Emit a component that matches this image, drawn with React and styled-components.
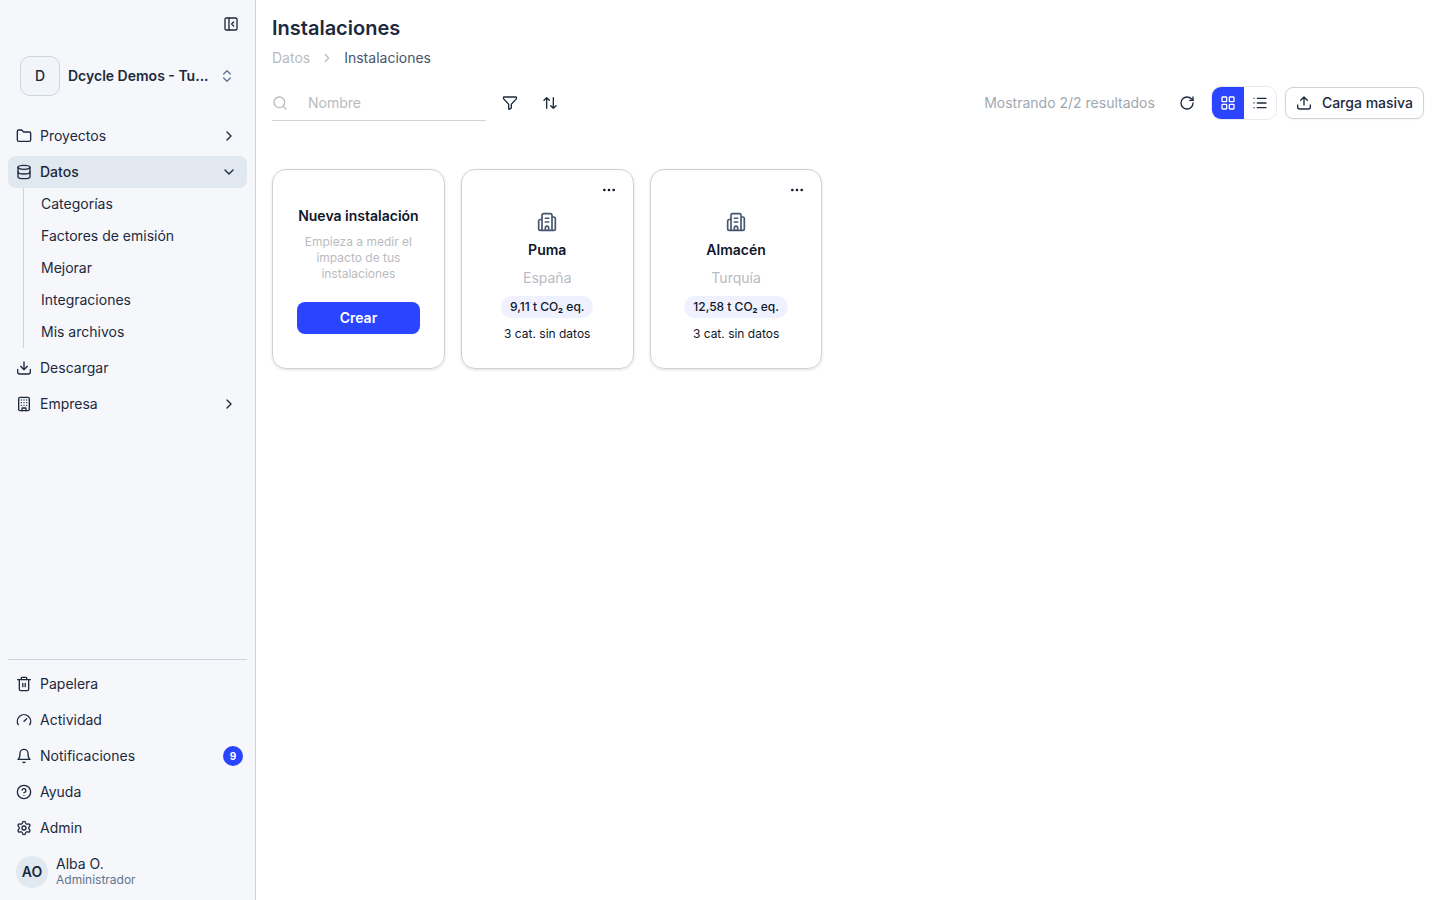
import React from 'react';
import styled, { createGlobalStyle, css } from 'styled-components';
import {
  Building,
  ChevronDown,
  ChevronRight,
  CircleHelp,
  Database,
  Ellipsis,
  Folder,
  Gauge,
  LayoutGrid,
  List,
  PanelLeftClose,
  RotateCw,
  Search,
  Settings,
} from 'lucide-react';

const GlobalStyle = createGlobalStyle`
  :root {
    --blue: #2a44ff;
    --ink: #1d293d;
    --dark: #0f172b;
    --slate: #45556c;
    --muted: #b9bbc0;
    --line: #cad5e2;
    --border: #d0d1d5;
    --panel: #f5f7fb;
    --active: #e1e8ef;
    --fz-xs: 12px;
    --fz-sm: 14px;
    --fz-xl: 20px;
  }

  *,
  *::before,
  *::after {
    box-sizing: border-box;
  }

  body {
    margin: 0;
    background: #fff;
    color: var(--ink);
    font-family: Inter, 'Liberation Sans', sans-serif;
    font-size: var(--fz-sm);
    line-height: 20px;
    -webkit-font-smoothing: antialiased;
  }

  button,
  input {
    font: inherit;
    color: inherit;
  }

  button {
    padding: 0;
    border: 0;
    background: none;
    cursor: pointer;
  }

  a {
    color: inherit;
    text-decoration: none;
  }

  svg {
    display: block;
    flex-shrink: 0;
  }
`;

const StyledLayout = styled.div`
  display: flex;
  min-height: 100vh;
`;

const StyledSidebar = styled.aside`
  display: flex;
  flex-direction: column;
  flex: 0 0 256px;
  padding: 8px;
  border-right: 1px solid var(--line);
  background: var(--panel);
`;

const StyledToggle = styled.button`
  align-self: flex-end;
  padding: 8px;
`;

const StyledCompany = styled.button`
  display: flex;
  align-items: center;
  gap: 8px;
  margin: 16px 0 24px;
  padding: 0 12px;
  text-align: left;
  font-weight: 600;

  .logo {
    display: grid;
    place-items: center;
    flex: 0 0 40px;
    height: 40px;
    border: 1px solid var(--line);
    border-radius: 10px;
    background: #f1f5f9;
    font-weight: 500;
  }

  .name {
    white-space: nowrap;
  }

  svg {
    margin-left: auto;
    color: #62748e;
  }
`;

const StyledNav = styled.ul`
  display: flex;
  flex-direction: column;
  gap: 4px;
  margin: 0;
  padding: 0;
  list-style: none;
`;

const StyledNavItem = styled.a`
  display: flex;
  align-items: center;
  gap: 8px;
  height: 32px;
  padding: 0 10px 0 8px;
  border-radius: 8px;

  ${({ $active }) =>
    $active &&
    css`
      background: var(--active);
      font-weight: 500;
    `}

  .end {
    margin-left: auto;
  }
`;

const StyledSubNav = styled.ul`
  margin: 0 0 0 15px;
  padding: 0;
  border-left: 1px solid var(--line);
  list-style: none;

  a {
    display: block;
    padding: 6px 17px;
  }
`;

const StyledFooter = styled.div`
  margin-top: auto;
  padding-top: 8px;
  border-top: 1px solid var(--line);
`;

const StyledBadge = styled.span`
  display: grid;
  place-items: center;
  width: 20px;
  height: 20px;
  margin: 0 -6px 0 auto;
  border-radius: 50%;
  background: var(--blue);
  color: #fff;
  font-size: 10px;
  font-weight: 700;
`;

const StyledUser = styled.div`
  display: flex;
  align-items: center;
  gap: 8px;
  margin-top: 8px;
  padding: 4px 8px;
  line-height: 16px;

  .avatar {
    display: grid;
    place-items: center;
    width: 32px;
    height: 32px;
    border-radius: 50%;
    background: var(--active);
    font-weight: 600;
  }

  .role {
    color: #62748e;
    font-size: var(--fz-xs);
  }
`;

const StyledMain = styled.main`
  flex: 1;
  min-width: 0;
  padding: 16px;
`;

const StyledTitle = styled.h1`
  margin: 0;
  font-size: var(--fz-xl);
  font-weight: 600;
  line-height: 24px;
`;

const StyledBreadcrumb = styled.nav`
  display: flex;
  align-items: center;
  gap: 10px;
  margin-top: 8px;
  color: var(--muted);

  .current {
    color: var(--slate);
  }
`;

const StyledToolbar = styled.div`
  display: flex;
  align-items: center;
  gap: 8px;
  margin-top: 17px;
`;

const StyledSearch = styled.label`
  display: flex;
  align-items: center;
  gap: 20px;
  width: 214px;
  height: 36px;
  border-bottom: 1px solid var(--border);
  color: var(--muted);

  input {
    width: 100%;
    min-width: 0;
    padding: 0;
    border: 0;
    outline: 0;
    background: none;
    color: var(--ink);
  }

  input::placeholder {
    color: var(--muted);
    opacity: 1;
  }
`;

const StyledIconButton = styled.button`
  display: grid;
  place-items: center;
  width: 32px;
  height: 32px;
`;

const StyledCount = styled.span`
  margin-left: auto;
  padding-right: 8px;
  color: #a1a7b0;
`;

const StyledSwitch = styled.div`
  display: flex;
  border: 1px solid #e8e9ec;
  border-radius: 10px;
  overflow: hidden;
`;

const StyledView = styled(StyledIconButton)`
  background: ${({ $active }) => ($active ? 'var(--blue)' : '#fff')};
  color: ${({ $active }) => ($active ? '#fff' : 'inherit')};
`;

const StyledUpload = styled.button`
  display: flex;
  align-items: center;
  gap: 10px;
  height: 32px;
  padding: 0 10px;
  border: 1px solid var(--border);
  border-radius: 8px;
  box-shadow: 0 1px 2px rgba(0, 0, 0, 0.05);
  font-weight: 500;
`;

const StyledGrid = styled.div`
  display: grid;
  grid-template-columns: repeat(6, 1fr);
  gap: 16px;
  margin-top: 48px;
  padding-right: 35px;
`;

const StyledCard = styled.article`
  position: relative;
  display: flex;
  flex-direction: column;
  align-items: center;
  min-height: 200px;
  padding: ${({ $create }) => ($create ? '36px 24px 24px' : '42px 8px 24px')};
  border: 1px solid var(--border);
  border-radius: 14px;
  box-shadow: 0 1px 3px rgba(0, 0, 0, 0.12);
  color: var(--dark);
  text-align: center;

  h2 {
    margin: 0;
    font-size: var(--fz-sm);
    font-weight: 600;
    white-space: nowrap;
  }

  p {
    margin: 0;
    font-size: var(--fz-xs);
    line-height: 16px;
  }

  .hint {
    margin: 8px 0 20px;
    color: var(--muted);
  }

  .country {
    margin: 8px 0;
    color: var(--muted);
  }

  .building {
    margin-bottom: 8px;
    color: var(--slate);
  }
`;

const StyledMore = styled.button`
  position: absolute;
  top: 12px;
  right: 16px;
`;

const StyledCreate = styled.button`
  width: 100%;
  height: 32px;
  border-radius: 8px;
  background: var(--blue);
  color: #fff;
  font-weight: 600;
`;

const StyledPill = styled.span`
  margin-bottom: 8px;
  padding: 3px 9px;
  border-radius: 11px;
  background: #eff1ff;
  font-size: var(--fz-xs);
  font-weight: 500;
  line-height: 16px;
`;

const Icon = ({ size = 16, children, ...rest }) => (
  <svg
    width={size}
    height={size}
    viewBox="0 0 24 24"
    fill="none"
    stroke="currentColor"
    strokeWidth={2}
    strokeLinecap="round"
    strokeLinejoin="round"
    aria-hidden="true"
    {...rest}>
    {children}
  </svg>
);

const SelectorIcon = () => (
  <Icon>
    <path d="M7 9l5-5 5 5M7 15l5 5 5-5" />
  </Icon>
);

const DownloadIcon = () => (
  <Icon>
    <path d="M12 3v11M7 9.500l5 5 5-5M2.500 14v4a3 3 0 0 0 3 3h13a3 3 0 0 0 3-3v-4" />
  </Icon>
);

const UploadIcon = () => (
  <Icon>
    <path d="M12 15V3M7 8l5-5 5 5M2.500 15v3a3 3 0 0 0 3 3h13a3 3 0 0 0 3-3v-3" />
  </Icon>
);

const TrashIcon = () => (
  <Icon>
    <path d="M2.500 5.500h19M5 5.500V20a2 2 0 0 0 2 2h10a2 2 0 0 0 2-2V5.500M8 5V3a1 1 0 0 1 1-1h6a1 1 0 0 1 1 1v2M10.200 11v5M13.800 11v5" />
  </Icon>
);

const BellIcon = () => (
  <Icon>
    <path d="M6 8a6 6 0 0 1 12 0c0 7 3 9 3 9H3s3-2 3-9M10.300 21a1.940 1.940 0 0 0 3.400 0" />
  </Icon>
);

const FilterIcon = () => (
  <Icon>
    <path d="M3 3h18a.8.8 0 0 1 .8.8v1a2 2 0 0 1-.6 1.400L14.600 13a2 2 0 0 0-.6 1.400V19a1 1 0 0 1-.5.9l-2 1.300a1 1 0 0 1-1.500-.9v-5.900a2 2 0 0 0-.6-1.400L2.800 6.200a2 2 0 0 1-.6-1.400v-1A.8.8 0 0 1 3 3z" />
  </Icon>
);

const SortIcon = () => (
  <Icon>
    <path d="M7 20V4M3 8l4-4 4 4M17 4v16M13 16l4 4 4-4" />
  </Icon>
);

const BuildingIcon = () => (
  <Icon size={20} className="building">
    <path d="M6 22V4a2 2 0 0 1 2-2h8a2 2 0 0 1 2 2v18zM6 9H4a2 2 0 0 0-2 2v9a2 2 0 0 0 2 2h2M18 6h2a2 2 0 0 1 2 2v12a2 2 0 0 1-2 2h-2M10 7.500h4M10 12h4M10 22v-3a2 2 0 0 1 4 0v3" />
  </Icon>
);

const dataLinks = ['Categorías', 'Factores de emisión', 'Mejorar', 'Integraciones', 'Mis archivos'];

const footerLinks = [
  { name: 'Papelera', icon: <TrashIcon /> },
  { name: 'Actividad', icon: <Gauge size={16} /> },
  { name: 'Notificaciones', icon: <BellIcon />, count: 9 },
  { name: 'Ayuda', icon: <CircleHelp size={16} /> },
  { name: 'Admin', icon: <Settings size={16} /> },
];

const facilities = [
  { name: 'Puma', country: 'España', total: '9,11' },
  { name: 'Almacén', country: 'Turquía', total: '12,58' },
];

const Sidebar = () => (
  <StyledSidebar>
    <StyledToggle aria-label="Contraer menú">
      <PanelLeftClose size={16} />
    </StyledToggle>

    <StyledCompany>
      <span className="logo">D</span>
      <span className="name">Dcycle Demos - Tu...</span>
      <SelectorIcon />
    </StyledCompany>

    <StyledNav>
      <li>
        <StyledNavItem href="#proyectos">
          <Folder size={16} />
          Proyectos
          <ChevronRight size={16} className="end" />
        </StyledNavItem>
      </li>
      <li>
        <StyledNavItem href="#datos" $active>
          <Database size={16} />
          Datos
          <ChevronDown size={16} className="end" />
        </StyledNavItem>
        <StyledSubNav>
          {dataLinks.map(name => (
            <li key={name}>
              <a href="#datos">{name}</a>
            </li>
          ))}
        </StyledSubNav>
      </li>
      <li>
        <StyledNavItem href="#descargar">
          <DownloadIcon />
          Descargar
        </StyledNavItem>
      </li>
      <li>
        <StyledNavItem href="#empresa">
          <Building size={16} />
          Empresa
          <ChevronRight size={16} className="end" />
        </StyledNavItem>
      </li>
    </StyledNav>

    <StyledFooter>
      <StyledNav>
        {footerLinks.map(({ name, icon, count }) => (
          <li key={name}>
            <StyledNavItem href={`#${name.toLowerCase()}`}>
              {icon}
              {name}
              {count && <StyledBadge>{count}</StyledBadge>}
            </StyledNavItem>
          </li>
        ))}
      </StyledNav>
      <StyledUser>
        <span className="avatar">AO</span>
        <div>
          <div>Alba O.</div>
          <div className="role">Administrador</div>
        </div>
      </StyledUser>
    </StyledFooter>
  </StyledSidebar>
);

const App = () => (
  <>
    <GlobalStyle />
    <StyledLayout>
      <Sidebar />

      <StyledMain>
        <StyledTitle>Instalaciones</StyledTitle>
        <StyledBreadcrumb>
          <a href="#datos">Datos</a>
          <ChevronRight size={14} />
          <span className="current">Instalaciones</span>
        </StyledBreadcrumb>

        <StyledToolbar>
          <StyledSearch>
            <Search size={16} />
            <input type="text" placeholder="Nombre" aria-label="Nombre" />
          </StyledSearch>
          <StyledIconButton aria-label="Filtrar">
            <FilterIcon />
          </StyledIconButton>
          <StyledIconButton aria-label="Ordenar">
            <SortIcon />
          </StyledIconButton>

          <StyledCount>Mostrando 2/2 resultados</StyledCount>
          <StyledIconButton aria-label="Actualizar">
            <RotateCw size={16} />
          </StyledIconButton>
          <StyledSwitch>
            <StyledView $active aria-label="Cuadrícula">
              <LayoutGrid size={16} />
            </StyledView>
            <StyledView aria-label="Lista">
              <List size={16} />
            </StyledView>
          </StyledSwitch>
          <StyledUpload>
            <UploadIcon />
            Carga masiva
          </StyledUpload>
        </StyledToolbar>

        <StyledGrid>
          <StyledCard $create>
            <h2>Nueva instalación</h2>
            <p className="hint">Empieza a medir el impacto de tus instalaciones</p>
            <StyledCreate>Crear</StyledCreate>
          </StyledCard>

          {facilities.map(({ name, country, total }) => (
            <StyledCard key={name}>
              <StyledMore aria-label="Opciones">
                <Ellipsis size={16} />
              </StyledMore>
              <BuildingIcon />
              <h2>{name}</h2>
              <span className="country">{country}</span>
              <StyledPill>{total} t CO₂ eq.</StyledPill>
              <p>3 cat. sin datos</p>
            </StyledCard>
          ))}
        </StyledGrid>
      </StyledMain>
    </StyledLayout>
  </>
);

export default App;
